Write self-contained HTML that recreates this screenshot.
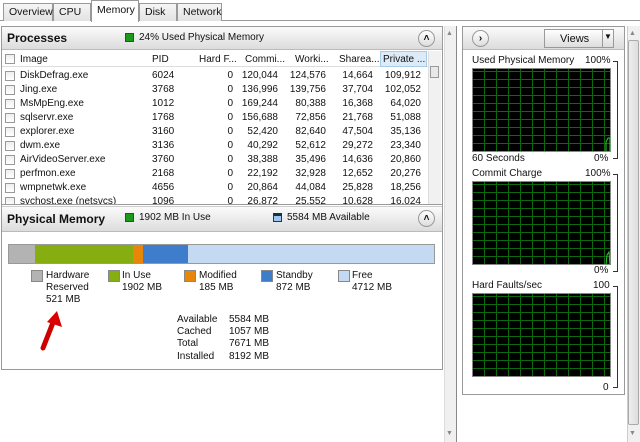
<!DOCTYPE html>
<html><head><meta charset="utf-8"><style>
*{margin:0;padding:0;box-sizing:border-box}
body{width:640px;height:442px;overflow:hidden;background:#fff;font-family:"Liberation Sans",sans-serif;font-size:10px;color:#111;position:relative}
.a{position:absolute;white-space:nowrap}
.tab{position:absolute;top:3px;height:18px;border:1px solid #999;border-bottom:none;background:linear-gradient(#f6f6f6,#e2e2e2);font-size:10.5px;padding:2px 0 0 5px}
.hdr{position:absolute;background:linear-gradient(#fbfbfb,#dcdcdc);border-bottom:1px solid #bbb}
.circ{position:absolute;width:17px;height:17px;border-radius:50%;border:1px solid #999;background:linear-gradient(#fff,#ddd);font-size:10px;text-align:center;line-height:15px;font-weight:bold}
.cb{position:absolute;left:5px;width:10px;height:10px;border:1px solid #999;background:linear-gradient(#eee,#fff)}
.r{position:absolute;text-align:right}
.graph{position:absolute;left:472px;width:139px;background-color:#000;border:1px solid #888;
background-image:repeating-linear-gradient(90deg,transparent 0 11px,#0b6a0b 11px 12px),repeating-linear-gradient(0deg,transparent 0 7px,#0b6a0b 7px 8px)}
.br{position:absolute;left:613px;width:5px;border:1px solid #333;border-left:none}
.sq{position:absolute;width:12px;height:12px;border:1px solid #888}
</style></head><body>
<div style="position:absolute;left:0;top:20px;width:640px;height:1px;background:#999"></div>
<div class="tab" style="left:3px;width:50px">Overview</div>
<div class="tab" style="left:53px;width:38px">CPU</div>
<div class="tab" style="left:91px;width:48px;top:0;height:22px;background:#fff;padding-top:3px">Memory</div>
<div class="tab" style="left:139px;width:38px">Disk</div>
<div class="tab" style="left:177px;width:45px">Network</div>

<div style="position:absolute;left:1px;top:26px;width:442px;height:344px;border:1px solid #999"></div>
<div class="hdr" style="left:2px;top:27px;width:440px;height:23px"></div>
<div class="a" style="left:7px;top:31px;font-weight:bold;font-size:12px">Processes</div>
<div class="a" style="left:125px;top:33px;width:9px;height:9px;background:#1a9a1a;border:1px solid #063"></div>
<div class="a" style="left:139px;top:32px">24% Used Physical Memory</div>
<div class="circ" style="left:418px;top:30px">˄</div>

<div style="position:absolute;left:2px;top:51px;width:426px;height:16px;border-bottom:1px solid #ddd;background:#fff"></div>
<div style="position:absolute;left:380px;top:51px;width:47px;height:16px;background:#dcebf7;border:1px solid #a8cbe8"></div>
<div class="cb" style="top:54px"></div>
<div class="a" style="left:20px;top:54px">Image</div>
<div class="a" style="left:152px;top:54px">PID</div>
<div class="a" style="left:199px;top:54px">Hard F...</div>
<div class="a" style="left:245px;top:54px">Commi...</div>
<div class="a" style="left:295px;top:54px">Worki...</div>
<div class="a" style="left:339px;top:54px">Sharea...</div>
<div class="a" style="left:383px;top:54px">Private ...</div>
<div style="position:absolute;left:428px;top:51px;width:13px;height:153px;background:#f1f1f1;border-left:1px solid #ddd"></div>
<div class="a" style="left:430px;top:66px;width:9px;height:12px;border:1px solid #999;background:#e8e8e8"></div>

<div id="rows"></div>

<div style="position:absolute;left:2px;top:204px;width:440px;height:1px;background:#999"></div>
<div class="hdr" style="left:2px;top:206px;width:440px;height:26px;border-top:1px solid #ccc"></div>
<div class="a" style="left:7px;top:212px;font-weight:bold;font-size:12px">Physical Memory</div>
<div class="a" style="left:125px;top:213px;width:9px;height:9px;background:#1a9a1a;border:1px solid #063"></div>
<div class="a" style="left:139px;top:212px">1902 MB In Use</div>
<div class="a" style="left:273px;top:213px;width:9px;height:9px;background:#9cc6ee;border:1px solid #236;border-top:3px solid #134"></div>
<div class="a" style="left:287px;top:212px">5584 MB Available</div>
<div class="circ" style="left:418px;top:210px">˄</div>

<div style="position:absolute;left:8px;top:244px;width:427px;height:20px;border:1px solid #999;display:flex">
<div style="width:26px;background:#b3b3b3"></div><div style="width:98px;background:#86ae10"></div><div style="width:10px;background:#e8860a"></div><div style="width:45px;background:#3d7dcc"></div><div style="flex:1;background:#c4daf2"></div></div>

<div class="sq" style="left:31px;top:270px;background:#b3b3b3"></div>
<div class="a" style="left:46px;top:270px;line-height:12px">Hardware<br>Reserved<br>521 MB</div>
<div class="sq" style="left:108px;top:270px;background:#86ae10"></div>
<div class="a" style="left:122px;top:270px;line-height:12px">In Use<br>1902 MB</div>
<div class="sq" style="left:184px;top:270px;background:#e8860a"></div>
<div class="a" style="left:199px;top:270px;line-height:12px">Modified<br>185 MB</div>
<div class="sq" style="left:261px;top:270px;background:#3d7dcc"></div>
<div class="a" style="left:276px;top:270px;line-height:12px">Standby<br>872 MB</div>
<div class="sq" style="left:338px;top:270px;background:#c4daf2"></div>
<div class="a" style="left:352px;top:270px;line-height:12px">Free<br>4712 MB</div>

<div class="a" style="left:177px;top:314px;line-height:12.2px">Available<br>Cached<br>Total<br>Installed</div>
<div class="a" style="left:229px;top:314px;line-height:12.2px">5584 MB<br>1057 MB<br>7671 MB<br>8192 MB</div>

<svg class="a" style="left:36px;top:308px" width="30" height="45"><path d="M7 40 L18 12" stroke="#c00" stroke-width="5" stroke-linecap="round"/><path d="M21 3 L26 19 L11 14 Z" fill="#d00"/></svg>

<div style="position:absolute;left:444px;top:26px;width:13px;height:416px;background:#f0f0f0;border-right:1px solid #888;border-left:1px solid #ddd"></div>
<div class="a" style="left:446px;top:30px;font-size:7px;color:#888">▲</div>
<div class="a" style="left:446px;top:430px;font-size:7px;color:#888">▼</div>

<div style="position:absolute;left:462px;top:26px;width:163px;height:369px;border:1px solid #999"></div>
<div class="hdr" style="left:463px;top:27px;width:161px;height:23px"></div>
<div class="circ" style="left:472px;top:30px">›</div>
<div style="position:absolute;left:544px;top:29px;width:70px;height:19px;border:1px solid #999;background:linear-gradient(#fff,#ddd);font-size:11px;padding:3px 0 0 15px">Views</div>
<div style="position:absolute;left:602px;top:30px;width:1px;height:17px;background:#999"></div>
<div class="a" style="left:604px;top:32px;font-size:8px">▼</div>

<div class="a" style="left:472px;top:55px">Used Physical Memory</div>
<div class="a" style="left:585px;top:55px">100%</div>
<div class="graph" style="top:68px;height:84px"></div>
<svg class="a" style="left:605px;top:130px" width="6" height="22"><path d="M1 22 L1 12 L3 8 L5 8 L5 22" stroke="#3c3" fill="none"/></svg>
<div class="a" style="left:472px;top:153px">60 Seconds</div>
<div class="a" style="left:594px;top:153px">0%</div>
<div class="br" style="top:61px;height:98px"></div>

<div class="a" style="left:472px;top:168px">Commit Charge</div>
<div class="a" style="left:585px;top:168px">100%</div>
<div class="graph" style="top:181px;height:84px"></div>
<svg class="a" style="left:605px;top:250px" width="6" height="15"><path d="M1 15 L2 5 L4 2 L5 15" stroke="#3c3" fill="none"/></svg>
<div class="a" style="left:594px;top:265px">0%</div>
<div class="br" style="top:174px;height:98px"></div>

<div class="a" style="left:472px;top:280px">Hard Faults/sec</div>
<div class="a" style="left:593px;top:280px">100</div>
<div class="graph" style="top:293px;height:84px"></div>
<div class="a" style="left:603px;top:382px">0</div>
<div class="br" style="top:286px;height:102px"></div>

<div style="position:absolute;left:627px;top:26px;width:13px;height:416px;background:#f0f0f0;border-left:1px solid #ccc"></div>
<div style="position:absolute;left:628px;top:40px;width:11px;height:385px;background:linear-gradient(90deg,#eee,#ddd);border:1px solid #aaa;border-radius:2px"></div>
<div class="a" style="left:629px;top:30px;font-size:7px;color:#888">▲</div>
<div class="a" style="left:629px;top:430px;font-size:7px;color:#888">▼</div>

<script>
var d=[["DiskDefrag.exe",6024,0,"120,044","124,576","14,664","109,912"],["Jing.exe",3768,0,"136,996","139,756","37,704","102,052"],["MsMpEng.exe",1012,0,"169,244","80,388","16,368","64,020"],["sqlservr.exe",1768,0,"156,688","72,856","21,768","51,088"],["explorer.exe",3160,0,"52,420","82,640","47,504","35,136"],["dwm.exe",3136,0,"40,292","52,612","29,272","23,340"],["AirVideoServer.exe",3760,0,"38,388","35,496","14,636","20,860"],["perfmon.exe",2168,0,"22,192","32,928","12,652","20,276"],["wmpnetwk.exe",4656,0,"20,864","44,084","25,828","18,256"],["svchost.exe (netsvcs)",1096,0,"26,872","25,552","10,628","16,024"]];
var h="";d.forEach(function(r,i){var y=70+i*14;
h+='<div class="cb" style="top:'+(y+1)+'px"></div><div class="a" style="left:20px;top:'+y+'px">'+r[0]+'</div><div class="a" style="left:152px;top:'+y+'px">'+r[1]+'</div>';
[[233,r[2]],[278,r[3]],[326,r[4]],[373,r[5]],[421,r[6]]].forEach(function(c){h+='<div class="r" style="right:'+(640-c[0])+'px;top:'+y+'px">'+c[1]+'</div>'});});
var e=document.getElementById("rows");e.style.cssText="position:absolute;left:0;top:0;width:640px;height:204px;overflow:hidden;clip-path:inset(67px 212px 0 0)";e.innerHTML=h;
</script>
</body></html>
